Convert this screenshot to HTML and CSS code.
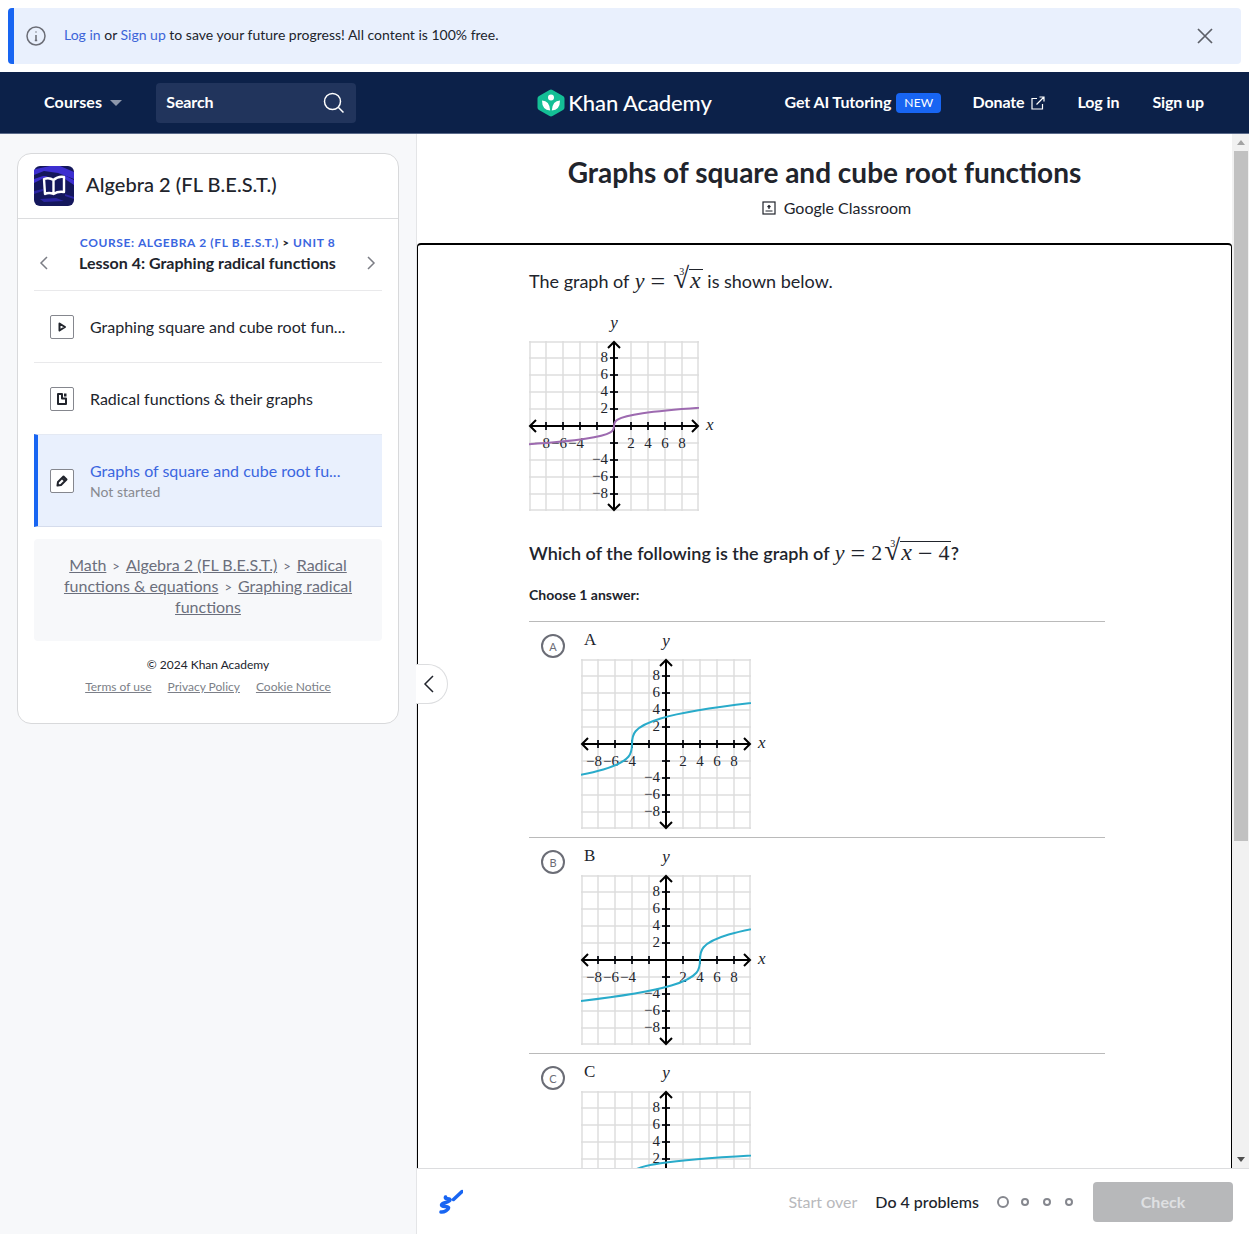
FILE: index.html
```html
<!DOCTYPE html>
<html lang="en">
<head>
    <meta charset="UTF-8">
    <title>Graphs of square and cube root functions</title>
    <link rel="stylesheet" href="styles.css">
</head>
<body>

<svg class="defs" width="0" height="0">
    <defs>
        <clipPath id="plotClip"><rect x="0" y="0" width="170" height="170"></rect></clipPath>
        <g id="plot">
            <path class="grid" d="M1 0V170M17 0V170M34 0V170M51 0V170M68 0V170M85 0V170M102 0V170M119 0V170M136 0V170M153 0V170M169 0V170M0 1H170M0 17H170M0 34H170M0 51H170M0 68H170M0 85H170M0 102H170M0 119H170M0 136H170M0 153H170M0 169H170"></path>
            <path class="ticks" d="M17 81V89M34 81V89M51 81V89M68 81V89M102 81V89M119 81V89M136 81V89M153 81V89M81 17H89M81 34H89M81 51H89M81 68H89M81 102H89M81 119H89M81 136H89M81 153H89"></path>
            <path class="axis" d="M1 85H169M85 1V169M7 79L1 85L7 91M163 79L169 85L163 91M79 7L85 1L91 7M79 163L85 169L91 163"></path>
            <text class="num" x="79" y="21" text-anchor="end">8</text>
            <text class="num" x="79" y="38" text-anchor="end">6</text>
            <text class="num" x="79" y="55" text-anchor="end">4</text>
            <text class="num" x="79" y="72" text-anchor="end">2</text>
            <text class="num" x="79" y="123" text-anchor="end">−4</text>
            <text class="num" x="79" y="140" text-anchor="end">−6</text>
            <text class="num" x="79" y="157" text-anchor="end">−8</text>
            <text class="num" x="21" y="107" text-anchor="end">−8</text>
            <text class="num" x="38" y="107" text-anchor="end">−6</text>
            <text class="num" x="55" y="107" text-anchor="end">−4</text>
            <text class="num" x="102" y="107" text-anchor="middle">2</text>
            <text class="num" x="119" y="107" text-anchor="middle">4</text>
            <text class="num" x="136" y="107" text-anchor="middle">6</text>
            <text class="num" x="153" y="107" text-anchor="middle">8</text>
            <text class="var" x="85" y="-13" text-anchor="middle">y</text>
            <text class="var" x="177" y="89">x</text>
        </g>
        <!-- y = cbrt(x), in graph units -->
        <path id="root" d="M-27 -3C27 -1 -27 1 27 3"></path>
    </defs>
</svg>

<div class="banner">
    <svg class="banner-icon" width="20" height="20" viewBox="0 0 20 20"><circle cx="10" cy="10" r="9"></circle><path d="M10 9V14.500M8.800 14.500H11.200M10 5.500V6.500"></path></svg>
    <p class="banner-text"><a href="#">Log in</a> or <a href="#">Sign up</a> to save your future progress! All content is 100% free.</p>
    <svg class="banner-close" width="16" height="16" viewBox="0 0 16 16"><path d="M1 1L15 15M15 1L1 15"></path></svg>
</div>

<nav class="topnav">
    <div class="nav-left">
        <a class="nav-link" href="#">Courses</a>
        <span class="caret"></span>
        <div class="search">
            <span>Search</span>
            <svg width="22" height="22" viewBox="0 0 22 22"><circle cx="9.500" cy="9.500" r="8"></circle><path d="M15.500 15.500L20.500 20.500"></path></svg>
        </div>
    </div>
    <a class="logo" href="#">
        <svg width="28" height="28" viewBox="0 0 28 28">
            <path class="logo-hex" d="M12.500 .9Q14 0 15.500 .9L26 7Q27.500 7.900 27.500 9.500V18.500Q27.500 20.100 26 21L15.500 27.100Q14 28 12.500 27.100L2 21Q.5 20.100 .5 18.500V9.500Q.5 7.900 2 7Z"></path>
            <circle class="logo-white" cx="14" cy="8.500" r="3"></circle>
            <path class="logo-white" d="M5 11.500Q12.500 11.500 13.200 21.500Q5 21 5 11.500ZM23 11.500Q15.500 11.500 14.800 21.500Q23 21 23 11.500Z"></path>
        </svg>
        <span>Khan Academy</span>
    </a>
    <div class="nav-right">
        <a class="nav-link" href="#">Get AI Tutoring</a>
        <span class="badge">NEW</span>
        <a class="nav-link donate" href="#">Donate
            <svg width="14" height="14" viewBox="0 0 14 14"><path d="M6 2.500H1V13H11.500V8M5.500 8.500L13 1M8.500 1H13V5.500"></path></svg>
        </a>
        <a class="nav-link login" href="#">Log in</a>
        <a class="nav-link signup" href="#">Sign up</a>
    </div>
</nav>

<div class="main">
    <aside class="sidebar">
        <div class="card">
            <div class="card-head">
                <svg class="course-icon" width="40" height="40" viewBox="0 0 40 40">
                    <rect width="40" height="40" rx="6" fill="#14175c"></rect>
                    <path d="M2 3L16 0H26L40 6V13L24 7L10 5L0 9V4Z" fill="#3d2fd0"></path>
                    <path d="M0 13L9 10L14 10L0 17ZM30 9L40 14V19L31 13Z" fill="#3d2fd0"></path>
                    <path d="M0 25L9 23V25L0 28ZM31 28L40 31V33L31 30ZM6 33L22 32L30 35L10 36Z" fill="#2a25a0"></path>
                    <path d="M10 13Q15 11 19.500 14Q24 10 30 11V26Q24 25 19.500 28Q15 26 11 28ZM19.500 14V28" fill="none" stroke="#fff" stroke-width="2.400" stroke-linejoin="round"></path>
                </svg>
                <h2>Algebra 2 (FL B.E.S.T.)</h2>
            </div>
            <div class="card-body">
                <div class="lesson-nav">
                    <svg class="chev" width="10" height="14" viewBox="0 0 10 14"><path d="M8 1L2 7L8 13"></path></svg>
                    <div class="lesson-title">
                        <div class="crumb"><a href="#">COURSE: ALGEBRA 2 (FL B.E.S.T.)</a> <b>&gt;</b> <a href="#">UNIT 8</a></div>
                        <div class="lesson-name">Lesson 4: Graphing radical functions</div>
                    </div>
                    <svg class="chev" width="10" height="14" viewBox="0 0 10 14"><path d="M2 1L8 7L2 13"></path></svg>
                </div>

                <a class="item" href="#">
                    <span class="item-icon"><svg width="12" height="12" viewBox="0 0 12 12"><path class="outline" d="M3.500 2.500L9 6L3.500 9.500Z"></path></svg></span>
                    <span class="item-title">Graphing square and cube root fun...</span>
                </a>
                <a class="item" href="#">
                    <span class="item-icon"><svg width="12" height="12" viewBox="0 0 12 12"><path class="outline" d="M2 1H6V5.500H10V11H2Z"></path><path class="solid" d="M8 .5H10.500V3.500H8Z"></path></svg></span>
                    <span class="item-title">Radical functions &amp; their graphs</span>
                </a>
                <a class="item active" href="#">
                    <span class="item-icon"><svg width="12" height="12" viewBox="0 0 12 12"><path class="outline" d="M7.500 1.500L10.500 4.500L5 10L1.500 10.500L2 7ZM6 3L9 6"></path></svg></span>
                    <span class="item-text">
                        <span class="item-title">Graphs of square and cube root fu...</span>
                        <span class="item-sub">Not started</span>
                    </span>
                </a>

                <div class="breadcrumbs">
                    <a href="#">Math</a><span class="sep">&gt;</span><a href="#">Algebra 2 (FL B.E.S.T.)</a><span class="sep">&gt;</span><a href="#">Radical functions &amp; equations</a><span class="sep">&gt;</span><a href="#">Graphing radical functions</a>
                </div>

                <div class="legal">
                    <p>© 2024 Khan Academy</p>
                    <div class="legal-links">
                        <a href="#">Terms of use</a>
                        <a href="#">Privacy Policy</a>
                        <a href="#">Cookie Notice</a>
                    </div>
                </div>
            </div>
        </div>
    </aside>

    <section class="content">
        <button class="collapse">
            <svg width="12" height="18" viewBox="0 0 12 18"><path d="M10 1L2 9L10 17"></path></svg>
        </button>

        <div class="ex-row">
            <div class="scroller">
                <header class="ex-head">
                    <h1>Graphs of square and cube root functions</h1>
                    <div class="classroom">
                        <svg width="14" height="14" viewBox="0 0 14 14"><rect x="1" y="1" width="12" height="12"></rect><path d="M3.500 10H10.500M7 4V8M5.500 6L7 4.500L8.500 6"></path></svg>
                        <span>Google Classroom</span>
                    </div>
                </header>

                <div class="exercise">
                    <p class="prompt">The graph of <span class="math"><i>y</i><span class="op">=</span><span class="radical"><sup>3</sup><span class="surd">√</span><span class="radicand"><i>x</i></span></span></span> is shown below.</p>
                    <svg class="graph first" width="190" height="196" viewBox="0 -26 190 196">
                        <use href="#plot"></use>
                        <g clip-path="url(#plotClip)"><g transform="translate(85 85) scale(8.500 -8.500)"><use class="curve purple" href="#root"></use></g></g>
                    </svg>

                    <p class="prompt strong">Which of the following is the graph of <span class="math"><i>y</i><span class="op">=</span>2<span class="radical"><sup>3</sup><span class="surd">√</span><span class="radicand"><i>x</i><span class="op">−</span><span class="digit">4</span></span></span></span>?</p>
                    <p class="choose">Choose 1 answer:</p>

                    <ul class="choices">
                        <li class="choice">
                            <span class="choice-mark">A</span>
                            <div class="choice-body">
                                <span class="choice-label">A</span>
                                <svg class="graph" width="190" height="196" viewBox="0 -26 190 196">
                                    <use href="#plot"></use>
                                    <g clip-path="url(#plotClip)"><g transform="translate(85 85) scale(8.500 -8.500) translate(-4 0) scale(1 2)"><use class="curve" href="#root"></use></g></g>
                                </svg>
                            </div>
                        </li>
                        <li class="choice">
                            <span class="choice-mark">B</span>
                            <div class="choice-body">
                                <span class="choice-label">B</span>
                                <svg class="graph" width="190" height="196" viewBox="0 -26 190 196">
                                    <use href="#plot"></use>
                                    <g clip-path="url(#plotClip)"><g transform="translate(85 85) scale(8.500 -8.500) translate(4 0) scale(1 2)"><use class="curve" href="#root"></use></g></g>
                                </svg>
                            </div>
                        </li>
                        <li class="choice">
                            <span class="choice-mark">C</span>
                            <div class="choice-body">
                                <span class="choice-label">C</span>
                                <svg class="graph" width="190" height="196" viewBox="0 -26 190 196">
                                    <use href="#plot"></use>
                                    <g clip-path="url(#plotClip)"><g transform="translate(85 85) scale(8.500 -8.500) translate(-4 0)"><use class="curve" href="#root"></use></g></g>
                                </svg>
                            </div>
                        </li>
                    </ul>
                </div>
            </div>

            <div class="scrollbar">
                <span class="sb-arrow"><span class="sb-up"></span></span>
                <span class="sb-thumb"></span>
                <span class="sb-arrow sb-bottom"><span class="sb-down"></span></span>
            </div>
        </div>

        <footer class="ex-foot">
            <svg class="scribble" width="26" height="26" viewBox="0 0 26 26"><path d="M4 23C7 23.500 12 20.500 11.500 18.500C11 16.500 4.500 18.500 4.500 16C4.500 13.500 13 13.500 13 11C13 8.500 7.500 11 8.500 8M16.500 10.500L25 2.500"></path></svg>
            <div class="foot-right">
                <span class="start-over">Start over</span>
                <span class="do-count">Do 4 problems</span>
                <span class="dots">
                    <span class="dot big"></span>
                    <span class="dot"></span>
                    <span class="dot"></span>
                    <span class="dot"></span>
                </span>
                <button class="check">Check</button>
            </div>
        </footer>
    </section>
</div>

</body>
</html>
```

FILE: styles.css
```css
* {
    box-sizing: border-box;
}
html, body {
    margin: 0;
    height: 100%;
}
body {
    font-family: Lato, 'Noto Sans', sans-serif;
    color: #21242c;
    background: #fff;
    height: 100vh;
    overflow: hidden;
    display: flex;
    flex-direction: column;
}
a {
    color: inherit;
    text-decoration: none;
}
p, h1, h2, ul {
    margin: 0;
    padding: 0;
}
.defs {
    position: absolute;
}

/* banner */
.banner {
    flex: none;
    height: 56px;
    margin: 8px;
    padding: 0 28px 0 12px;
    display: flex;
    align-items: center;
    background: #e9f0fd;
    border-left: 6px solid #1865f2;
    border-radius: 4px;
}
.banner-icon {
    fill: none;
    stroke: #6b6d76;
    stroke-width: 1.500;
}
.banner-text {
    flex: 1;
    margin: 0 0 4px 18px;
    font-size: 14px;
}
.banner-text a {
    color: #3c64d8;
}
.banner-close {
    fill: none;
    stroke: #5d5f68;
    stroke-width: 1.700;
}

/* top nav */
.topnav {
    flex: none;
    height: 62px;
    display: grid;
    grid-template-columns: 1fr auto 1fr;
    align-items: center;
    background: #0c2149;
    border-bottom: 1px solid #5a6a8a;
    color: #fff;
}
.nav-left, .nav-right {
    display: flex;
    align-items: center;
}
.nav-left {
    padding-left: 44px;
}
.nav-left .nav-link {
    letter-spacing: .15px;
}
.nav-right {
    justify-content: flex-end;
    padding-right: 45px;
}
.nav-link {
    padding-bottom: 2px;
    font-size: 16px;
    font-weight: 700;
    letter-spacing: -.1px;
    color: #fff;
}
.caret {
    margin-left: 8px;
    width: 0;
    height: 0;
    border-left: 6px solid transparent;
    border-right: 6px solid transparent;
    border-top: 6px solid #8d97ab;
}
.search {
    width: 200px;
    height: 40px;
    margin-left: 34px;
    padding: 0 11px 0 10px;
    display: flex;
    align-items: center;
    justify-content: space-between;
    background: #21345c;
    border-radius: 4px;
    font-size: 16px;
    font-weight: 700;
    letter-spacing: -.1px;
}
.search span {
    padding-bottom: 2px;
}
.search svg {
    fill: none;
    stroke: #fff;
    stroke-width: 1.500;
}
.logo {
    display: flex;
    align-items: center;
    gap: 3px;
    font-size: 22px;
    font-weight: 500;
    letter-spacing: -.1px;
    color: #fff;
}
.logo-hex {
    fill: #14bf96;
}
.logo-white {
    fill: #fff;
}
.badge {
    margin-left: 5px;
    padding: 0 8px;
    height: 20px;
    line-height: 20px;
    background: #1865f2;
    border-radius: 4px;
    font-size: 12px;
    letter-spacing: .2px;
}
.donate {
    margin-left: 31px;
    display: flex;
    align-items: center;
    gap: 6px;
}
.donate svg {
    margin-top: 2px;
    fill: none;
    stroke: #fff;
    stroke-width: 1.200;
}
.login {
    margin-left: 33px;
}
.signup {
    margin-left: 33px;
}

/* sidebar */
.main {
    flex: 1;
    min-height: 0;
    display: flex;
}
.sidebar {
    flex: none;
    width: 417px;
    padding: 19px 17px 0 17px;
    background: #f7f8fa;
    border-right: 1px solid #e4e5e7;
}
.card {
    background: #fff;
    border: 1px solid #d8d9db;
    border-radius: 14px;
    height: 571px;
}
.card-head {
    height: 65px;
    padding: 0 16px;
    display: flex;
    align-items: center;
    gap: 12px;
    border-bottom: 1px solid #dcdddf;
}
.card-head h2 {
    padding-bottom: 4px;
    font-size: 20px;
    font-weight: 500;
    letter-spacing: .05px;
}
.card-body {
    padding: 0 16px;
}
.lesson-nav {
    height: 72px;
    padding: 0 6px 0 5px;
    display: flex;
    align-items: center;
    justify-content: space-between;
    border-bottom: 1px solid #e9e9eb;
}
.chev {
    margin-top: 16px;
    fill: none;
    stroke: #7b7d85;
    stroke-width: 1.500;
}
.lesson-title {
    text-align: center;
}
.crumb {
    font-size: 12px;
    font-weight: 700;
    letter-spacing: .62px;
    line-height: 16px;
}
.crumb a {
    color: #3b66e0;
}
.crumb b {
    font-size: 11px;
}
.lesson-name {
    font-size: 16px;
    font-weight: 700;
    line-height: 22px;
    margin-top: 1px;
}
.item {
    height: 72px;
    padding-left: 16px;
    display: flex;
    align-items: center;
    gap: 16px;
    border-bottom: 1px solid #e9e9eb;
    font-size: 16px;
}
.item-icon {
    flex: none;
    width: 24px;
    height: 24px;
    display: flex;
    align-items: center;
    justify-content: center;
    border: 1px solid #85878e;
    border-radius: 2px;
    background: #fff;
}
.solid {
    fill: #21242c;
}
.outline {
    fill: none;
    stroke: #21242c;
    stroke-width: 2;
    stroke-linejoin: round;
}
.item.active {
    height: 93px;
    padding-left: 12px;
    background: #e9f0fd;
    border-left: 4px solid #1865f2;
    border-bottom: 1px solid #d5dcec;
    border-top: 1px solid #e4e9f3;
    margin-top: -1px;
}
.item.active .item-title {
    color: #3b66e0;
}
.item-text {
    display: flex;
    flex-direction: column;
}
.item-sub {
    font-size: 14px;
    color: #888a90;
    margin-top: 3px;
}
.breadcrumbs {
    margin-top: 12px;
    height: 102px;
    padding: 15px 20px 0;
    background: #f7f8fa;
    border-radius: 4px;
    text-align: center;
    font-size: 16px;
    line-height: 21px;
    color: #6b6f7c;
}
.breadcrumbs a {
    text-decoration: underline;
}
.sep {
    margin: 0 6px;
    font-size: 13px;
    line-height: 1;
}
.legal {
    margin-top: 16px;
    text-align: center;
}
.legal p {
    font-size: 12px;
    line-height: 16px;
}
.legal-links {
    margin-top: 6px;
    display: flex;
    justify-content: center;
    gap: 16px;
    font-size: 12px;
    line-height: 16px;
    color: #7c7f88;
}
.legal-links a {
    text-decoration: underline;
}

/* exercise */
.content {
    flex: 1;
    min-width: 0;
    position: relative;
    display: flex;
    flex-direction: column;
}
.collapse {
    position: absolute;
    left: -1px;
    top: 530px;
    z-index: 2;
    width: 32px;
    height: 40px;
    padding: 0 0 0 7px;
    display: flex;
    align-items: center;
    background: #fff;
    border: 1px solid #dcdddf;
    border-left: 0;
    border-radius: 0 20px 20px 0;
}
.collapse svg {
    fill: none;
    stroke: #21242c;
    stroke-width: 1.500;
}
.ex-row {
    flex: 1;
    min-height: 0;
    display: flex;
}
.scroller {
    flex: 1;
    min-width: 0;
    overflow: hidden;
}
.scrollbar {
    flex: none;
    width: 17px;
    display: flex;
    flex-direction: column;
    background: #f1f1f1;
}
.sb-arrow {
    height: 17px;
    display: flex;
    align-items: center;
    justify-content: center;
}
.sb-bottom {
    margin-top: auto;
}
.sb-up {
    border-left: 4px solid transparent;
    border-right: 4px solid transparent;
    border-bottom: 5px solid #a3a3a3;
}
.sb-down {
    border-left: 4px solid transparent;
    border-right: 4px solid transparent;
    border-top: 5px solid #505050;
}
.sb-thumb {
    height: 690px;
    margin: 0 1px 0 2px;
    background: #c1c1c1;
}
.ex-head {
    height: 109px;
    padding-top: 19px;
    text-align: center;
}
.ex-head h1 {
    font-size: 28px;
    font-weight: 700;
    line-height: 38px;
}
.classroom {
    margin: 6px 0 0 24px;
    display: flex;
    justify-content: center;
    align-items: center;
    gap: 8px;
    font-size: 16px;
    line-height: 22px;
}
.classroom svg {
    fill: none;
    stroke: #21242c;
    stroke-width: 1.200;
}
.exercise {
    padding: 22px 126px 60px 111px;
    border: 2px solid #000;
    border-bottom: 0;
    border-width: 2px 1px 0 1.500px;
    border-radius: 4px 4px 0 0;
}
.prompt {
    font-size: 18px;
    line-height: 28px;
}
.prompt.strong {
    font-weight: 600;
    letter-spacing: .03px;
    margin-top: 28px;
}
.math {
    margin-left: 1px;
    font-family: 'Liberation Serif', serif;
    font-size: 22px;
    font-weight: 400;
    line-height: 0;
}
.math i {
    letter-spacing: 1px;
}
.op {
    margin: 0 6px 0 5px;
    font-size: 26px;
    vertical-align: -2px;
}
.radical {
    margin-left: 2px;
    position: relative;
    white-space: nowrap;
}
.radical sup {
    position: absolute;
    left: 6px;
    top: -1px;
    font-size: 10px;
    line-height: 10px;
}
.surd {
    font-size: 29px;
    line-height: 0;
}
.radicand {
    border-top: 1px solid #21242c;
    padding: 0 1px;
    font-size: 20px;
}
.radicand i {
    font-size: 24px;
}
.digit {
    font-size: 22px;
}
.graph {
    display: block;
    overflow: visible;
}
.graph.first {
    margin-top: 20px;
}
.grid {
    fill: none;
    stroke: #dedede;
    stroke-width: 1.500;
}
.ticks {
    fill: none;
    stroke: #21242c;
    stroke-width: 2;
}
.axis {
    fill: none;
    stroke: #000;
    stroke-width: 2;
}
.num {
    font-family: 'Liberation Serif', serif;
    font-size: 15px;
    fill: #21242c;
}
.var {
    font-family: 'Liberation Serif', serif;
    font-style: italic;
    font-size: 17px;
    fill: #21242c;
}
.curve {
    fill: none;
    stroke: #29abca;
    stroke-width: 2;
}
.curve.purple {
    stroke: #9d6ab0;
}
#root {
    vector-effect: non-scaling-stroke;
}
.choose {
    margin-top: 18px;
    font-size: 14px;
    font-weight: 700;
    line-height: 20px;
}
.choices {
    margin-top: 16px;
    list-style: none;
}
.choice {
    height: 216px;
    padding: 11px 0 0 12px;
    display: flex;
    border-top: 1px solid #bababa;
}
.choice-mark {
    flex: none;
    width: 24px;
    height: 24px;
    margin-top: 1px;
    border: 2px solid #6b6d76;
    border-radius: 50%;
    display: flex;
    align-items: center;
    justify-content: center;
    font-size: 11px;
    color: #6b6d76;
}
.choice-body {
    margin-left: 16px;
    position: relative;
}
.choice-label {
    position: absolute;
    left: 3px;
    top: -3px;
    font-family: 'Liberation Serif', serif;
    font-size: 17px;
    line-height: 20px;
    z-index: 1;
}

/* bottom bar */
.ex-foot {
    flex: none;
    height: 66px;
    padding: 0 16px 0 20px;
    display: flex;
    align-items: center;
    justify-content: space-between;
    background: #fff;
    border-top: 1px solid #dcdddf;
}
.scribble {
    fill: none;
    stroke: #1865f2;
    stroke-width: 3.500;
    stroke-linecap: round;
    stroke-linejoin: round;
}
.foot-right {
    display: flex;
    align-items: center;
    font-size: 16px;
}
.start-over {
    color: #b8b9bc;
}
.do-count {
    margin-left: 18px;
    font-weight: 500;
}
.dots {
    margin-left: 18px;
    display: flex;
    align-items: center;
    gap: 14px;
}
.dot {
    width: 8px;
    height: 8px;
    border: 2px solid #85878e;
    border-radius: 50%;
}
.dot.big {
    width: 12px;
    height: 12px;
    margin-right: -2px;
}
.check {
    margin-left: 20px;
    width: 140px;
    height: 40px;
    border: 0;
    border-radius: 4px;
    background: #b7b8ba;
    color: #dfe0e2;
    font-family: Lato, sans-serif;
    font-size: 16px;
    font-weight: 700;
}
```
